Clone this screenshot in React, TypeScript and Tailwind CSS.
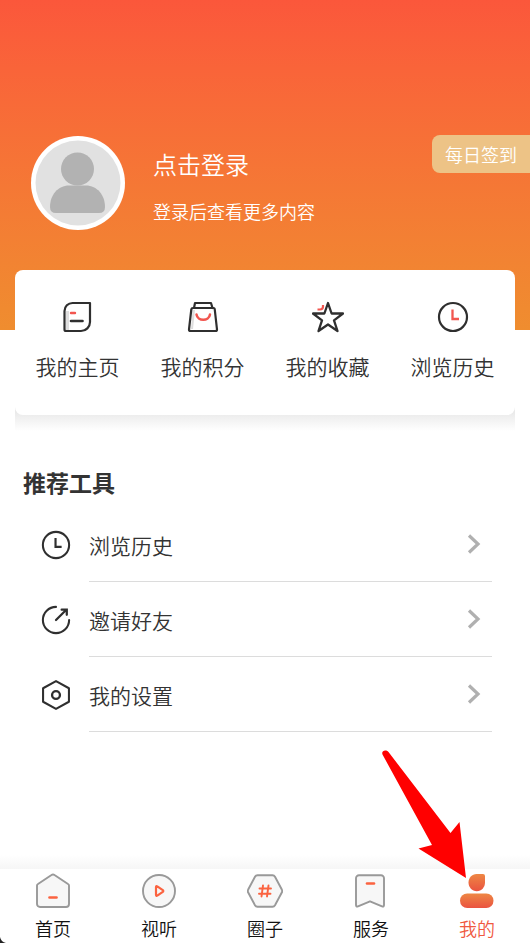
import type { ReactNode } from "react";

const INK = "#2f2f2f";
const RED = "#f2564f";
const TAB_RED = "#fb6340";

function HomepageIcon() {
  return (
    <svg viewBox="0 0 32 32" className="size-8" fill="none" strokeLinecap="round" strokeLinejoin="round" aria-hidden="true">
      <path d="M4 10v19h3V10z" fill="#dedede" />
      <path d="M10.500 2H28v19a9 9 0 0 1-9 9H4a1.500 1.500 0 0 1-1.500-1.500V10a8 8 0 0 1 8-8z" stroke={INK} strokeWidth="2.200" />
      <path d="M9 12h4" stroke={RED} strokeWidth="2.400" />
      <path d="M9 20h11.500" stroke={INK} strokeWidth="2.600" />
    </svg>
  );
}

function PointsIcon() {
  return (
    <svg viewBox="0 0 32 32" className="size-8" fill="none" strokeLinecap="round" strokeLinejoin="round" aria-hidden="true">
      <path d="M5.500 9 4 28h2L8 9z" fill="#dedede" />
      <path d="M7 7 8 2h16l1.500 5" stroke={INK} strokeWidth="2.200" />
      <path d="M6 7h20.500q1 0 1.200 1L30 28.500a1.500 1.500 0 0 1-1.500 1.500h-25A1.500 1.500 0 0 1 2 28.500L4.300 8.500Q4.500 7 6 7z" stroke={INK} strokeWidth="2.200" />
      <path d="M9.500 13.500c1 7 12.500 7 13.500 0" stroke={RED} strokeWidth="2.500" />
    </svg>
  );
}

function StarIcon() {
  return (
    <svg viewBox="0 0 32 32" className="size-8" fill="none" strokeLinejoin="round" aria-hidden="true">
      <path d="m16 2 3.600 10.500H31l-9 6.800L25.500 30 16 23.500 6.500 30 10 19.300 1 12.500h11.400z" stroke={INK} strokeWidth="2.300" />
      <path d="M5.500 8.500h2.500a3 3 0 0 0 3-3V4" stroke={RED} strokeWidth="2.200" />
    </svg>
  );
}

function ClockIcon({ hands, className }: { hands: string; className: string }) {
  return (
    <svg viewBox="0 0 32 32" className={className} fill="none" aria-hidden="true">
      <circle cx="16" cy="16" r="14" stroke={INK} strokeWidth="2.200" />
      <path d="M15.500 8.500v9.500h6.500" stroke={hands} strokeWidth="2.300" />
    </svg>
  );
}

function InviteIcon() {
  return (
    <svg viewBox="0 0 32 32" className="size-[30px]" fill="none" strokeLinecap="round" aria-hidden="true">
      <path d="M16 2a14 14 0 1 0 14 14" stroke={INK} strokeWidth="2.200" />
      <path d="M16 16 27 5M22 5h5.500v5.500" stroke={INK} strokeWidth="2.400" />
    </svg>
  );
}

function SettingsIcon() {
  return (
    <svg viewBox="0 0 32 32" className="size-[30px]" fill="none" strokeLinejoin="round" aria-hidden="true">
      <path d="M16 1.200 29.800 8.800v14.400L16 30.800 2.200 23.200V8.800z" stroke={INK} strokeWidth="2.200" />
      <circle cx="16" cy="16" r="4.200" stroke={INK} strokeWidth="2.500" />
    </svg>
  );
}

function TabSvg({ children }: { children: ReactNode }) {
  return (
    <svg viewBox="0 0 36 36" className="size-9" fill="none" strokeLinecap="round" strokeLinejoin="round" aria-hidden="true">
      {children}
    </svg>
  );
}

const TAB_LINE = { stroke: "#999", strokeWidth: 1.9, fill: "#f7f7f7" };

const shortcuts = [
  { label: "我的主页", icon: <HomepageIcon /> },
  { label: "我的积分", icon: <PointsIcon /> },
  { label: "我的收藏", icon: <StarIcon /> },
  { label: "浏览历史", icon: <ClockIcon hands={RED} className="size-8" /> },
];

const tools = [
  { label: "浏览历史", icon: <ClockIcon hands={INK} className="size-[30px]" /> },
  { label: "邀请好友", icon: <InviteIcon /> },
  { label: "我的设置", icon: <SettingsIcon /> },
];

const tabs = [
  {
    label: "首页",
    icon: (
      <TabSvg>
        <path d="M16.500 2a2.500 2.500 0 0 1 3 0l13.500 9a2 2 0 0 1 1 2V31a3 3 0 0 1-3 3H5a3 3 0 0 1-3-3V13a2 2 0 0 1 1-2z" {...TAB_LINE} />
        <path d="M14.500 24.500h7" stroke={TAB_RED} strokeWidth="2.600" />
      </TabSvg>
    ),
  },
  {
    label: "视听",
    icon: (
      <TabSvg>
        <circle cx="18" cy="18" r="16" {...TAB_LINE} />
        <path d="M15 14.200v7.600q0 1.400 1.300.800l5.500-3.800q1-.800 0-1.600l-5.500-3.800q-1.300-.600-1.300.800z" stroke={TAB_RED} strokeWidth="2.200" />
      </TabSvg>
    ),
  },
  {
    label: "圈子",
    icon: (
      <TabSvg>
        <path d="M10.500 2.200h15a3 3 0 0 1 2.500 1.500l6.800 12.800a3 3 0 0 1 0 3L28 32.300a3 3 0 0 1-2.500 1.500h-15A3 3 0 0 1 8 32.300L1.200 19.500a3 3 0 0 1 0-3L8 3.700a3 3 0 0 1 2.500-1.500z" {...TAB_LINE} />
        <path d="M16 12.500 14.500 23.500M21.500 12.500 20 23.500M12.500 15.500H24M12 20.700h11.500" stroke={TAB_RED} strokeWidth="1.900" />
      </TabSvg>
    ),
  },
  {
    label: "服务",
    icon: (
      <TabSvg>
        <path d="M6 2.200h22a3 3 0 0 1 3 3V32q0 2-2 1.400L17 28.300 5 33.400Q3 34 3 32V5.200a3 3 0 0 1 3-3z" {...TAB_LINE} />
        <path d="M14 10.500h7" stroke={TAB_RED} strokeWidth="2.600" />
      </TabSvg>
    ),
  },
  {
    label: "我的",
    active: true,
    icon: (
      <TabSvg>
        <defs>
          <linearGradient id="meFill" x1="0" y1="0" x2="0" y2="1">
            <stop offset="0" stopColor="#ee8744" />
            <stop offset="1" stopColor="#ea5340" />
          </linearGradient>
        </defs>
        <path d="M17.500 1H24a2 2 0 0 1 2 2v6.500c0 4.800-3.500 8.700-8.200 8.700s-8.300-3.900-8.300-8.700S13 1 17.500 1z" fill="url(#meFill)" />
        <rect x="1" y="20.500" width="33.500" height="14.500" rx="7.200" fill="url(#meFill)" />
      </TabSvg>
    ),
  },
];

export default function App() {
  return (
    <div className="relative flex min-h-screen flex-col overflow-hidden bg-white font-['Noto_Sans_CJK_SC',sans-serif] font-[350] text-[#333]">
      <header className="flex items-start bg-linear-to-b from-[#fb573b] to-[#ef8d2f] pt-[135px] pb-[100px] pl-[31px] text-white">
        <svg viewBox="0 0 94 94" className="mt-px size-[94px] shrink-0" role="img" aria-label="头像">
          <circle cx="47" cy="47" r="47" fill="#fff" />
          <circle cx="47" cy="47" r="42.500" fill="#e1e1e1" />
          <circle cx="46.500" cy="33" r="16.500" fill="#b2b2b2" />
          <path d="M19 71c0-12 8-21.500 19-21.500h17c11 0 19 9.500 19 21.500q0 6-6 6H25q-6 0-6-6z" fill="#b2b2b2" />
        </svg>
        <div className="ml-7 flex flex-col items-start gap-[15px] pt-[11px]">
          <button type="button" className="text-2xl leading-9">点击登录</button>
          <p className="text-lg leading-7">登录后查看更多内容</p>
        </div>
        <button type="button" className="ml-auto h-[38px] rounded-l-lg bg-[#edc386] px-[13px] text-lg leading-9">
          每日签到
        </button>
      </header>

      <section className="mx-[15px] -mt-[60px]">
        <div className="relative grid grid-cols-4 rounded-lg bg-white pt-[31px] pb-[34px]">
          {shortcuts.map((s) => (
            <button key={s.label} type="button" className="flex flex-col items-center gap-[18px] text-[21px] leading-[30px]">
              {s.icon}
              {s.label}
            </button>
          ))}
        </div>
        <div className="-mt-2 h-6 bg-linear-to-b from-[#e4e4e4] to-white" />
      </section>

      <section className="px-[23px] pt-[33px]">
        <h2 className="text-[23px] leading-9 font-bold">推荐工具</h2>
        <ul className="pt-[7px]">
          {tools.map((t) => (
            <li key={t.label}>
              <button type="button" className="flex h-[75px] w-full items-center pr-[15px] pl-[18px] text-left">
                {t.icon}
                <span className="ml-[18px] flex h-full flex-1 items-center justify-between border-b border-[#dcdcdc] pr-[11px] text-[21px]">
                  <span className="pt-1">{t.label}</span>
                  <svg viewBox="0 0 14 20" className="h-5 w-3.5" fill="none" aria-hidden="true">
                    <path d="m2 1.500 9 8.500-9 8.500" stroke="#b0b0b0" strokeWidth="3.200" />
                  </svg>
                </span>
              </button>
            </li>
          ))}
        </ul>
      </section>

      <div className="mt-auto h-3.5 bg-linear-to-b from-white to-[#f6f6f6]" />
      <nav className="grid grid-cols-5 bg-white pt-1 pb-px">
        {tabs.map((t) => (
          <a
            key={t.label}
            href="#"
            aria-current={t.active ? "page" : undefined}
            className={`flex flex-col items-center gap-[5px] text-lg leading-7 ${t.active ? "text-[#f0593f]" : "text-[#111]"}`}
          >
            {t.icon}
            {t.label}
          </a>
        ))}
      </nav>

      <svg viewBox="0 0 90 132" className="pointer-events-none absolute right-[60px] bottom-[62px] h-[132px] w-[90px]" aria-hidden="true">
        <path d="M2.500 5.500C1 1.500 6 .300 8.500 3L70.500 84 79.500 73 86 129 38.500 99.500 52 96z" fill="#ff0000" />
      </svg>
      <svg viewBox="0 0 6 6" className="absolute bottom-0 left-0 size-1.5" aria-hidden="true">
        <path d="M0 0q1 5 6 6H0z" fill="#222" />
      </svg>
    </div>
  );
}
